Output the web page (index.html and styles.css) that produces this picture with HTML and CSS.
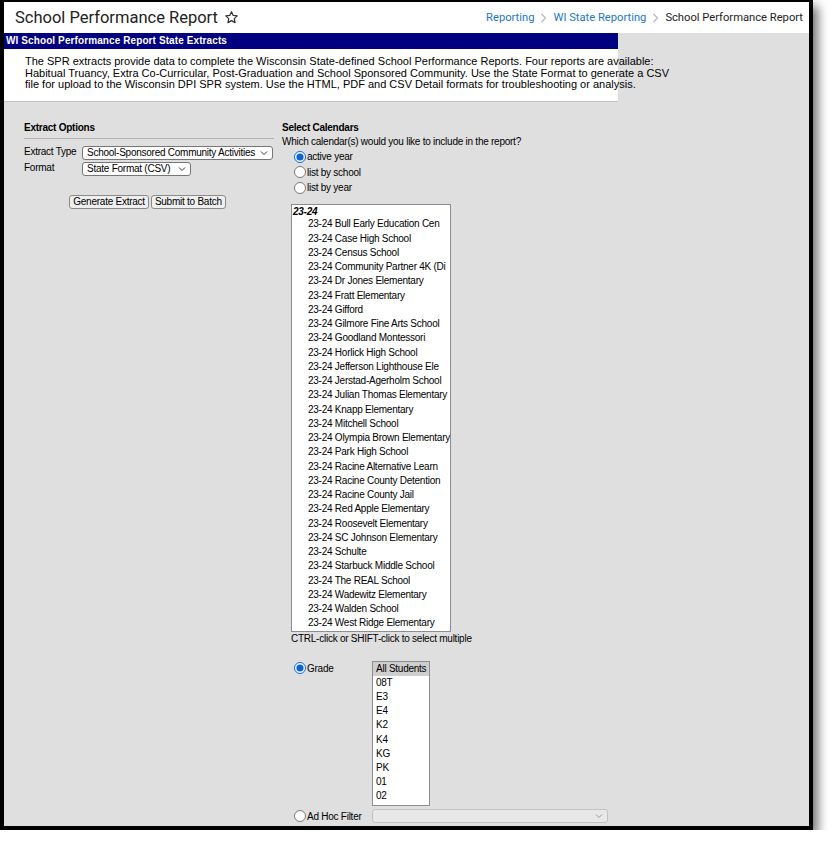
FILE: index.html
```html
<!DOCTYPE html>
<html lang="en">
<head>
<meta charset="utf-8">
<title>School Performance Report</title>
<link rel="stylesheet" href="styles.css">
</head>
<body>
<div class="frame">
  <header class="topbar">
    <div class="title">
      <span class="title-text">School Performance Report</span>
      <svg class="star" width="15" height="15" viewBox="0 0 24 24" aria-hidden="true"><path d="M12 2.8l2.75 5.9 6.45.75-4.8 4.4 1.3 6.35L12 17.05 6.3 20.2l1.3-6.35-4.8-4.4 6.45-.75z" fill="none" stroke="#333" stroke-width="2" stroke-linejoin="round"/></svg>
    </div>
    <nav class="crumbs">
      <a class="crumb-link">Reporting</a>
      <svg class="chev" width="7" height="10" viewBox="0 0 7 10" aria-hidden="true"><polyline points="1.5,1 5.5,5 1.5,9" fill="none" stroke="#b8b8b8" stroke-width="1.2"/></svg>
      <a class="crumb-link">WI State Reporting</a>
      <svg class="chev" width="7" height="10" viewBox="0 0 7 10" aria-hidden="true"><polyline points="1.5,1 5.5,5 1.5,9" fill="none" stroke="#b8b8b8" stroke-width="1.2"/></svg>
      <span class="crumb-current">School Performance Report</span>
    </nav>
  </header>
  <main class="main">
    <div class="banner">WI School Performance Report State Extracts</div>
    <div class="desc">The SPR extracts provide data to complete the Wisconsin State-defined School Performance Reports. Four reports are available:<br>Habitual Truancy, Extra Co-Curricular, Post-Graduation and School Sponsored Community. Use the State Format to generate a CSV<br>file for upload to the Wisconsin DPI SPR system. Use the HTML, PDF and CSV Detail formats for troubleshooting or analysis.</div>
    <div class="form">
      <section class="col-left">
        <div class="sec-head sec-head-line">Extract Options</div>
        <div class="field-row first">
          <span class="field-label">Extract Type</span>
          <div class="dropdown dd-type"><span class="dd-text">School-Sponsored Community Activities</span><svg class="dd-chev" width="8" height="6" viewBox="0 0 8 6"><polyline points="1,1.5 4,4.5 7,1.5" fill="none" stroke="#333" stroke-width="1"/></svg></div>
        </div>
        <div class="field-row">
          <span class="field-label">Format</span>
          <div class="dropdown dd-format"><span class="dd-text">State Format (CSV)</span><svg class="dd-chev" width="8" height="6" viewBox="0 0 8 6"><polyline points="1,1.5 4,4.5 7,1.5" fill="none" stroke="#333" stroke-width="1"/></svg></div>
        </div>
        <div class="buttons">
          <button class="btn" type="button">Generate Extract</button>
          <button class="btn" type="button">Submit to Batch</button>
        </div>
      </section>
      <section class="col-right">
        <div class="sec-head">Select Calendars</div>
        <div class="line">Which calendar(s) would you like to include in the report?</div>
        <label class="radio-row"><input type="radio" name="cal" checked><span>active year</span></label>
        <label class="radio-row"><input type="radio" name="cal"><span>list by school</span></label>
        <label class="radio-row"><input type="radio" name="cal"><span>list by year</span></label>
        <div class="listbox cal-list" role="listbox">
          <div class="group-label">23-24</div>
          <div class="opt">23-24 Bull Early Education Cen</div>
          <div class="opt">23-24 Case High School</div>
          <div class="opt">23-24 Census School</div>
          <div class="opt">23-24 Community Partner 4K (Di</div>
          <div class="opt">23-24 Dr Jones Elementary</div>
          <div class="opt">23-24 Fratt Elementary</div>
          <div class="opt">23-24 Gifford</div>
          <div class="opt">23-24 Gilmore Fine Arts School</div>
          <div class="opt">23-24 Goodland Montessori</div>
          <div class="opt">23-24 Horlick High School</div>
          <div class="opt">23-24 Jefferson Lighthouse Ele</div>
          <div class="opt">23-24 Jerstad-Agerholm School</div>
          <div class="opt">23-24 Julian Thomas Elementary</div>
          <div class="opt">23-24 Knapp Elementary</div>
          <div class="opt">23-24 Mitchell School</div>
          <div class="opt">23-24 Olympia Brown Elementary</div>
          <div class="opt">23-24 Park High School</div>
          <div class="opt">23-24 Racine Alternative Learn</div>
          <div class="opt">23-24 Racine County Detention</div>
          <div class="opt">23-24 Racine County Jail</div>
          <div class="opt">23-24 Red Apple Elementary</div>
          <div class="opt">23-24 Roosevelt Elementary</div>
          <div class="opt">23-24 SC Johnson Elementary</div>
          <div class="opt">23-24 Schulte</div>
          <div class="opt">23-24 Starbuck Middle School</div>
          <div class="opt">23-24 The REAL School</div>
          <div class="opt">23-24 Wadewitz Elementary</div>
          <div class="opt">23-24 Walden School</div>
          <div class="opt">23-24 West Ridge Elementary</div>
        </div>
        <div class="hint">CTRL-click or SHIFT-click to select multiple</div>
        <div class="grade-row">
          <label class="radio-row radio-grade"><input type="radio" name="who" checked><span>Grade</span></label>
          <div class="listbox grade-list" role="listbox">
            <div class="gopt selected">All Students</div>
            <div class="gopt">08T</div>
            <div class="gopt">E3</div>
            <div class="gopt">E4</div>
            <div class="gopt">K2</div>
            <div class="gopt">K4</div>
            <div class="gopt">KG</div>
            <div class="gopt">PK</div>
            <div class="gopt">01</div>
            <div class="gopt">02</div>
          </div>
        </div>
        <div class="adhoc-row">
          <label class="radio-row radio-grade"><input type="radio" name="who"><span>Ad Hoc Filter</span></label>
          <div class="dropdown dd-adhoc disabled"><span class="dd-text"></span><svg class="dd-chev" width="8" height="6" viewBox="0 0 8 6"><polyline points="1,1.5 4,4.5 7,1.5" fill="none" stroke="#999" stroke-width="1"/></svg></div>
        </div>
      </section>
    </div>
  </main>
</div>
</body>
</html>
```
FILE: styles.css
```css
html, body {
  margin: 0;
  padding: 0;
  background: #ffffff;
}
body {
  font-family: "Liberation Sans", Arial, sans-serif;
  font-size: 11px;
  color: #000;
}
.frame {
  width: 805px;
  height: 824px;
  border-style: solid;
  border-color: #000;
  border-width: 2px 4px 4px 4px;
  box-shadow: 5px 6px 10px rgba(0, 0, 0, 0.55);
  background: #dfdfdf;
  display: flex;
  flex-direction: column;
  overflow: hidden;
}
.topbar {
  height: 31px;
  flex: 0 0 31px;
  background: #fff;
  display: flex;
  align-items: center;
  justify-content: space-between;
  padding: 0 6px 0 11px;
}
.title {
  display: flex;
  align-items: center;
  gap: 6px;
}
.title-text {
  font-family: Roboto, "Liberation Sans", sans-serif;
  font-size: 16.5px;
  color: #222;
}
.star {
  display: block;
  margin-top: -1px;
}
.crumbs {
  display: flex;
  align-items: center;
  gap: 6px;
  font-family: Roboto, "Liberation Sans", sans-serif;
  font-size: 11.2px;
}
.crumb-link {
  color: #2377c8;
}
.crumb-current {
  color: #222;
}
.chev {
  display: block;
}
.main {
  flex: 1;
  background: #dfdfdf;
}
.banner {
  width: 612px;
  height: 16px;
  line-height: 16px;
  background: #000080;
  color: #fff;
  font-weight: bold;
  font-size: 10px;
  letter-spacing: 0.1px;
  padding-left: 2px;
}
.desc {
  width: 593px;
  background: #fff;
  padding: 7px 0 10px 21px;
  line-height: 11.6px;
  border-bottom: 1px solid #c4c4c4;
  white-space: nowrap;
}
.form {
  display: grid;
  grid-template-columns: 250px 1fr;
  column-gap: 8px;
  padding: 19px 0 0 20px;
  font-size: 10px;
  letter-spacing: -0.25px;
}
.sec-head {
  font-weight: bold;
  line-height: 14px;
}
.sec-head-line {
  padding-bottom: 3px;
  border-bottom: 1px solid #b4b4b4;
}
.col-left {
  display: flex;
  flex-direction: column;
}
.field-row {
  display: flex;
  align-items: center;
  margin-top: 2px;
}
.field-row.first {
  margin-top: 7px;
}
.field-label {
  width: 58px;
  flex: 0 0 58px;
  position: relative;
  top: -1px;
}
.dropdown {
  height: 12px;
  border: 1px solid #767676;
  border-radius: 3px;
  background: #fff;
  display: flex;
  align-items: center;
  justify-content: space-between;
  padding: 0 4px 0 4px;
  white-space: nowrap;
}
.dd-type {
  width: 181px;
}
.dd-format {
  width: 99px;
}
.dd-adhoc {
  width: 226px;
}
.dropdown.disabled {
  border-color: #c2c2c2;
  background: #e8e8e8;
}
.dd-chev {
  display: block;
  flex: 0 0 auto;
}
.buttons {
  display: flex;
  justify-content: center;
  gap: 2px;
  margin-top: 19px;
  padding-right: 3px;
}
.btn {
  font-family: "Liberation Sans", Arial, sans-serif;
  font-size: 10px;
  letter-spacing: -0.25px;
  height: 14px;
  line-height: 12px;
  padding: 0 3px;
  border: 1px solid #8a8a8a;
  border-radius: 3px;
  background: #efefef;
  color: #000;
}
.col-right {
  display: flex;
  flex-direction: column;
  align-items: flex-start;
}
.line {
  line-height: 14px;
}
.radio-row {
  display: flex;
  align-items: center;
  height: 15.5px;
  padding-left: 12px;
}
.radio-row input {
  width: 12px;
  height: 12px;
  margin: 0 1px 0 0;
  accent-color: #0b63d6;
}
.listbox {
  border: 1px solid #8c8c93;
  background: #fff;
  overflow: hidden;
  box-sizing: border-box;
}
.cal-list {
  width: 160px;
  height: 428px;
  margin: 9px 0 0 9px;
  padding-top: 1px;
}
.group-label {
  font-weight: bold;
  font-style: italic;
  height: 11px;
  line-height: 11px;
  padding-left: 1px;
}
.opt {
  height: 14.25px;
  line-height: 14.25px;
  padding-left: 16px;
  white-space: nowrap;
}
.hint {
  line-height: 14px;
  margin: 0 0 0 9px;
}
.grade-row {
  display: flex;
  align-items: flex-start;
  margin-top: 15px;
}
.radio-grade {
  width: 78px;
  height: 14px;
}
.grade-list {
  width: 58px;
  height: 145px;
  padding-top: 0;
}
.gopt {
  height: 14.05px;
  line-height: 14.05px;
  padding-left: 3px;
  white-space: nowrap;
}
.gopt.selected {
  background: #cecece;
}
.adhoc-row {
  display: flex;
  align-items: center;
  margin-top: 3px;
}
```
